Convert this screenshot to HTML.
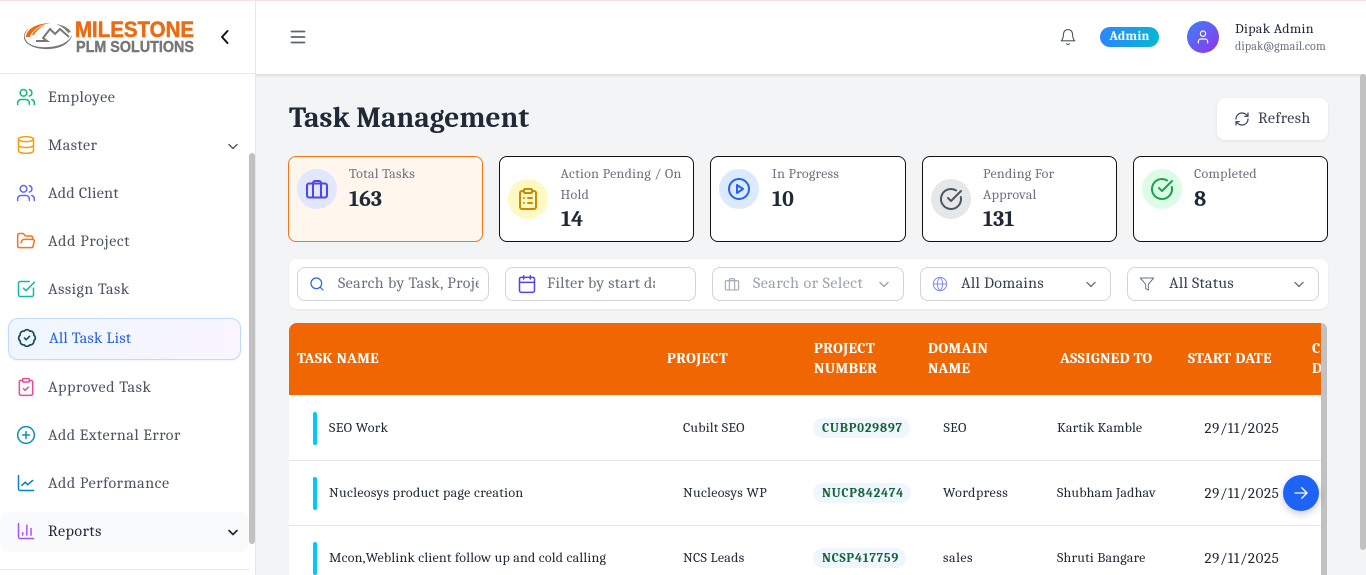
<!DOCTYPE html>
<html><head><meta charset="utf-8"><title>Task Management</title>
<style>
*{box-sizing:border-box}
html,body{margin:0;padding:0;width:1366px;height:575px;overflow:hidden;background:#f3f4f6;font-family:Caladea,Cambria,"Liberation Serif",serif;color:#1f2937}
.a{position:absolute;white-space:nowrap}
svg.i{position:absolute;fill:none;stroke-width:2;stroke-linecap:round;stroke-linejoin:round}
.m{position:absolute;left:48px;font-size:16px;letter-spacing:.5px;line-height:20px;color:#4b5563;white-space:nowrap}
.card{position:absolute;top:156px;height:86px;background:#fff;border:1px solid #111;border-radius:8px}
.circ{position:absolute;width:40px;height:40px;border-radius:50%}
.cl{position:absolute;font-size:14px;letter-spacing:.27px;line-height:20.5px;color:#6b7280;white-space:nowrap}
.cv{position:absolute;font-size:22px;line-height:24px;font-weight:700;color:#1f2937}
.f{position:absolute;top:267px;height:34px;background:#fff;border:1px solid #d1d5db;border-radius:8px}
.ft{position:absolute;top:274px;font-size:16px;letter-spacing:.3px;line-height:18px;white-space:nowrap;overflow:hidden}
.th{position:absolute;color:#fff;font-weight:700;font-size:15px;letter-spacing:.4px;line-height:20px;white-space:nowrap}
.td{position:absolute;font-size:14px;line-height:20px;color:#1f2937;white-space:nowrap}
.bar{position:absolute;left:313px;width:4px;height:33px;background:#00c8ff;border-radius:2px}
.pill{position:absolute;left:813px;height:20px;border-radius:10px;background:#eff6ff;color:#166534;font-weight:700;font-size:13px;line-height:21px;padding:0 7px 0 9px;white-space:nowrap;letter-spacing:.75px}
.ln{position:absolute;left:289px;width:1032px;height:1px;background:#e5e7eb}
</style></head><body>
<!-- main header -->
<div class="a" style="left:0;top:0;width:1366px;height:74px;background:#fff;box-shadow:0 1px 3px rgba(0,0,0,.15)"></div>
<div class="a" style="left:0;top:0;width:1366px;height:1px;background:#f3e3e8"></div>
<svg class="i" style="left:289px;top:28px;stroke:#5b6472;stroke-width:1.800" width="18" height="18" viewBox="0 0 18 18"><path d="M2.500 3.500h13M2.500 9h13M2.500 14.500h13"/></svg>
<svg class="i" style="left:1059px;top:28px;stroke:#4b5563;stroke-width:1.500" width="18" height="18" viewBox="0 0 24 24"><path d="M6 8a6 6 0 0 1 12 0c0 7 3 9 3 9H3s3-2 3-9"/><path d="M10.300 21a1.940 1.940 0 0 0 3.400 0"/></svg>
<div class="a" style="left:1100px;top:27px;width:59px;height:20px;border-radius:10px;background:linear-gradient(90deg,#2b86ff,#06b6d4);color:#fff;font-size:13px;font-weight:700;line-height:20px;text-align:center;letter-spacing:.2px">Admin</div>
<div class="a" style="left:1187px;top:21px;width:32px;height:32px;border-radius:50%;background:linear-gradient(135deg,#3b82f6,#9333ea)"></div>
<svg class="i" style="left:1195px;top:29px;stroke:#fff;stroke-width:1.700" width="16" height="16" viewBox="0 0 24 24"><path d="M19 21v-2a4 4 0 0 0-4-4H9a4 4 0 0 0-4 4v2"/><circle cx="12" cy="7" r="4"/></svg>
<div class="a" style="left:1235px;top:20px;font-size:14px;letter-spacing:.3px;line-height:18px;color:#1f2937">Dipak Admin</div>
<div class="a" style="left:1235px;top:38px;font-size:12px;letter-spacing:.13px;line-height:16px;color:#6b7280">dipak@gmail.com</div>

<!-- sidebar -->
<div class="a" style="left:0;top:1px;width:256px;height:574px;background:#fff;border-right:1px solid #e5e7eb"></div>
<div class="a" style="left:0;top:73px;width:256px;height:1px;background:#e5e7eb"></div>
<svg class="a" style="left:20px;top:15px" width="180" height="42" viewBox="0 0 180 42">
<path d="M9 13C3 17 2 25 8 29c9 7 30 7 39-1 3-3 5-5 5-8-2 5-9 11-23 12-12 1-22-2-24-9-1-3 1-7 4-10z" fill="#777"/>
<path d="M36 9c7 1 13 4 15 8l-3 1c-3-4-7-7-12-9z" fill="#808080"/>
<path d="M6 22C6 14 17 8 31 8 21 9 12 15 10 22z" fill="#ee6a10"/>
<path d="M12 20c2-5 7-8 13-10-5 3-9 6-11 10z" fill="#ee6a10"/>
<path d="M16 26h11l-4-3 7-9 5 5 5-5 9 8" fill="none" stroke="#777" stroke-width="2"/>
<text x="55" y="22" font-family="Liberation Sans" font-weight="700" font-size="22" fill="#ee6a10" stroke="#ee6a10" stroke-width=".5" textLength="119" lengthAdjust="spacingAndGlyphs">MILESTONE</text>
<text x="56" y="37" font-family="Liberation Sans" font-weight="700" font-size="15.500" fill="#777" stroke="#777" stroke-width=".4" textLength="118" lengthAdjust="spacingAndGlyphs">PLM SOLUTIONS</text>
</svg>
<svg class="i" style="left:217px;top:29px;stroke:#111" width="16" height="16" viewBox="0 0 16 16"><path d="M10.500 2 5 8l5.500 6"/></svg>

<svg class="i" style="left:16px;top:87px;stroke:#10b981;stroke-width:1.800" width="20" height="20" viewBox="0 0 24 24"><path d="M16 21v-2a4 4 0 0 0-4-4H6a4 4 0 0 0-4 4v2"/><circle cx="9" cy="7" r="4"/><path d="M22 21v-2a4 4 0 0 0-3-3.870M16 3.130a4 4 0 0 1 0 7.750"/></svg>
<div class="m" style="top:87px">Employee</div>
<svg class="i" style="left:16px;top:135px;stroke:#f59e0b;stroke-width:1.800" width="20" height="20" viewBox="0 0 24 24"><ellipse cx="12" cy="5" rx="9" ry="3"/><path d="M3 5v14c0 1.700 4 3 9 3s9-1.300 9-3V5M3 12c0 1.700 4 3 9 3s9-1.300 9-3"/></svg>
<div class="m" style="top:135px">Master</div>
<svg class="i" style="left:226px;top:139px;stroke:#4b5563;stroke-width:1.400" width="14" height="14" viewBox="0 0 14 14"><path d="M3 5.500 7 9.500 11 5.500"/></svg>
<svg class="i" style="left:16px;top:183px;stroke:#6366f1;stroke-width:1.800" width="20" height="20" viewBox="0 0 24 24"><path d="M16 21v-2a4 4 0 0 0-4-4H6a4 4 0 0 0-4 4v2"/><circle cx="9" cy="7" r="4"/><path d="M22 21v-2a4 4 0 0 0-3-3.870M16 3.130a4 4 0 0 1 0 7.750"/></svg>
<div class="m" style="top:183px;letter-spacing:.3px">Add Client</div>
<svg class="i" style="left:16px;top:231px;stroke:#f97316;stroke-width:1.800" width="20" height="20" viewBox="0 0 24 24"><path d="M6 14l1.500-2.900A2 2 0 0 1 9.200 10H20a2 2 0 0 1 1.900 2.500l-1.500 6a2 2 0 0 1-2 1.500H4a2 2 0 0 1-2-2V5a2 2 0 0 1 2-2h3.900a2 2 0 0 1 1.700.9l.8 1.200a2 2 0 0 0 1.700.9H18a2 2 0 0 1 2 2v2"/></svg>
<div class="m" style="top:231px;letter-spacing:.65px">Add Project</div>
<svg class="i" style="left:16px;top:279px;stroke:#14b8a6;stroke-width:1.800" width="20" height="20" viewBox="0 0 24 24"><path d="M21 11v8a2 2 0 0 1-2 2H5a2 2 0 0 1-2-2V5a2 2 0 0 1 2-2h11"/><path d="m9 11 3 3L22 4"/></svg>
<div class="m" style="top:279px">Assign Task</div>
<div class="a" style="left:8px;top:318px;width:233px;height:42px;border:1px solid #bfdbfe;border-radius:10px;background:linear-gradient(90deg,#eff6ff,#faf5ff);box-shadow:0 1px 2px rgba(0,0,0,.06)"></div>
<svg class="i" style="left:17px;top:328px;stroke:#164e63;stroke-width:2" width="20" height="20" viewBox="0 0 24 24"><path d="M3.850 8.620a4 4 0 0 1 4.780-4.770 4 4 0 0 1 6.740 0 4 4 0 0 1 4.780 4.780 4 4 0 0 1 0 6.740 4 4 0 0 1-4.770 4.780 4 4 0 0 1-6.750 0 4 4 0 0 1-4.780-4.770 4 4 0 0 1 0-6.760z"/><path d="m9 12 2 2 4-4"/></svg>
<div class="m" style="top:328px;left:49px;color:#2563eb;letter-spacing:.25px">All Task List</div>
<svg class="i" style="left:16px;top:377px;stroke:#ec4899;stroke-width:1.800" width="20" height="20" viewBox="0 0 24 24"><rect x="8" y="2" width="8" height="4" rx="1"/><path d="M16 4h2a2 2 0 0 1 2 2v14a2 2 0 0 1-2 2H6a2 2 0 0 1-2-2V6a2 2 0 0 1 2-2h2"/><path d="m9 14 2 2 4-4"/></svg>
<div class="m" style="top:377px;letter-spacing:.6px">Approved Task</div>
<svg class="i" style="left:16px;top:425px;stroke:#0891b2;stroke-width:1.800" width="20" height="20" viewBox="0 0 24 24"><circle cx="12" cy="12" r="10"/><path d="M8 12h8M12 8v8"/></svg>
<div class="m" style="top:425px">Add External Error</div>
<svg class="i" style="left:16px;top:473px;stroke:#0284c7;stroke-width:1.800" width="20" height="20" viewBox="0 0 24 24"><path d="M3 3v16a2 2 0 0 0 2 2h16"/><path d="m7 15 4-4 3 3 6-5"/></svg>
<div class="m" style="top:473px;letter-spacing:.55px">Add Performance</div>
<div class="a" style="left:0;top:512px;width:249px;height:40px;border-radius:10px;background:#f9fafb"></div>
<svg class="i" style="left:16px;top:521px;stroke:#a855f7;stroke-width:1.800" width="20" height="20" viewBox="0 0 24 24"><path d="M3 3v16a2 2 0 0 0 2 2h16M8 17v-3M13 17V5M18 17V9"/></svg>
<div class="m" style="top:521px;color:#1f2937">Reports</div>
<svg class="i" style="left:226px;top:525px;stroke:#1f2937;stroke-width:1.700" width="14" height="14" viewBox="0 0 14 14"><path d="M3 5.500 7 9.500 11 5.500"/></svg>
<div class="a" style="left:249px;top:153px;width:6px;height:391px;background:#c1c1c1;border-radius:3px"></div>
<div class="a" style="left:0;top:569px;width:249px;height:1px;background:#e5e7eb"></div>

<!-- page title -->
<div class="a" style="left:289px;top:101px;font-size:29.400px;line-height:36px;font-weight:700;color:#1f2937">Task Management</div>
<div class="a" style="left:1217px;top:98px;width:111px;height:42px;background:#fff;border-radius:8px;box-shadow:0 1px 3px rgba(0,0,0,.08)"></div>
<svg class="i" style="left:1234px;top:111px;stroke:#374151;stroke-width:1.800" width="16" height="16" viewBox="0 0 24 24"><path d="M3 12a9 9 0 0 1 9-9 9.750 9.750 0 0 1 6.740 2.740L21 8"/><path d="M21 3v5h-5"/><path d="M21 12a9 9 0 0 1-9 9 9.750 9.750 0 0 1-6.740-2.740L3 16"/><path d="M8 16H3v5"/></svg>
<div class="a" style="left:1258px;top:109px;font-size:16px;letter-spacing:.4px;line-height:18px;color:#374151">Refresh</div>

<!-- cards -->
<div class="card" style="left:288px;width:195px;background:#fff7ed;border-color:#f97316"></div>
<div class="circ" style="left:297px;top:169px;background:#e0e7ff"></div>
<svg class="i" style="left:305px;top:177px;stroke:#4f46e5;stroke-width:2" width="24" height="24" viewBox="0 0 24 24"><path d="M8 20V6a2 2 0 0 1 2-2h4a2 2 0 0 1 2 2v14"/><rect x="2" y="6.500" width="20" height="14" rx="2"/></svg>
<div class="cl" style="left:349px;top:164px">Total Tasks</div>
<div class="cv" style="left:349px;top:187px">163</div>

<div class="card" style="left:499px;width:195px"></div>
<div class="circ" style="left:508px;top:179px;background:#fef9c3"></div>
<svg class="i" style="left:516px;top:187px;stroke:#ca8a04;stroke-width:2" width="24" height="24" viewBox="0 0 24 24"><rect x="8" y="2" width="8" height="4" rx="1"/><path d="M16 4h2a2 2 0 0 1 2 2v14a2 2 0 0 1-2 2H6a2 2 0 0 1-2-2V6a2 2 0 0 1 2-2h2M12 11h4M12 16h4M8 11h.01M8 16h.01"/></svg>
<div class="cl" style="left:560.500px;top:164px">Action Pending / On<br>Hold</div>
<div class="cv" style="left:561px;top:207px">14</div>

<div class="card" style="left:710px;width:196px"></div>
<div class="circ" style="left:719px;top:169px;background:#dbeafe"></div>
<svg class="i" style="left:727px;top:177px;stroke:#2563eb;stroke-width:2" width="24" height="24" viewBox="0 0 24 24"><circle cx="12" cy="12" r="10"/><path d="m10 8 6 4-6 4z"/></svg>
<div class="cl" style="left:772px;top:164px">In Progress</div>
<div class="cv" style="left:772px;top:187px">10</div>

<div class="card" style="left:922px;width:195px"></div>
<div class="circ" style="left:931px;top:179px;background:#e5e7eb"></div>
<svg class="i" style="left:939px;top:187px;stroke:#4b5563;stroke-width:2" width="24" height="24" viewBox="0 0 24 24"><path d="M21.800 10A10 10 0 1 1 17 3.340"/><path d="m9 11 3 3L22 4"/></svg>
<div class="cl" style="left:983px;top:164px">Pending For<br>Approval</div>
<div class="cv" style="left:983px;top:207px">131</div>

<div class="card" style="left:1133px;width:195px"></div>
<div class="circ" style="left:1142px;top:169px;background:#dcfce7"></div>
<svg class="i" style="left:1150px;top:177px;stroke:#16a34a;stroke-width:2" width="24" height="24" viewBox="0 0 24 24"><path d="M21.800 10A10 10 0 1 1 17 3.340"/><path d="m9 11 3 3L22 4"/></svg>
<div class="cl" style="left:1194px;top:164px">Completed</div>
<div class="cv" style="left:1194px;top:187px">8</div>

<!-- filters -->
<div class="a" style="left:289px;top:259px;width:1039px;height:50px;background:#fff;border-radius:8px;box-shadow:0 1px 2px rgba(0,0,0,.05)"></div>
<div class="f" style="left:297px;width:192px"></div>
<svg class="i" style="left:309px;top:276px;stroke:#2563eb;stroke-width:1.800" width="16" height="16" viewBox="0 0 24 24"><circle cx="11" cy="11" r="8"/><path d="m21 21-4.300-4.300"/></svg>
<div class="ft" style="left:338px;width:141px;color:#6b7280;letter-spacing:.42px">Search by Task, Project</div>
<div class="f" style="left:505px;width:191px"></div>
<svg class="i" style="left:517px;top:274px;stroke:#4f46e5;stroke-width:1.800" width="20" height="20" viewBox="0 0 24 24"><path d="M8 2v4M16 2v4"/><rect x="3" y="4" width="18" height="18" rx="2"/><path d="M3 10h18"/></svg>
<div class="ft" style="left:547px;width:108px;color:#6b7280;letter-spacing:.3px">Filter by start date</div>
<div class="f" style="left:712px;width:192px"></div>
<svg class="i" style="left:724px;top:276px;stroke:#9ca3af;stroke-width:1.600" width="16" height="16" viewBox="0 0 24 24"><path d="M8 21V6a2 2 0 0 1 2-2h4a2 2 0 0 1 2 2v15"/><rect x="2" y="7" width="20" height="14" rx="2"/></svg>
<div class="ft" style="left:753px;width:112px;color:#9ca3af;letter-spacing:.5px">Search or Select</div>
<svg class="i" style="left:877px;top:277px;stroke:#9ca3af;stroke-width:1.400" width="14" height="14" viewBox="0 0 14 14"><path d="M3 5.500 7 9.500 11 5.500"/></svg>
<div class="f" style="left:920px;width:191px"></div>
<svg class="i" style="left:932px;top:276px;stroke:#818cf8;stroke-width:1.500" width="16" height="16" viewBox="0 0 24 24"><circle cx="12" cy="12" r="10"/><path d="M12 2a14.500 14.500 0 0 0 0 20 14.500 14.500 0 0 0 0-20M2 12h20"/></svg>
<div class="ft" style="left:961px;color:#374151">All Domains</div>
<svg class="i" style="left:1084px;top:277px;stroke:#6b7280;stroke-width:1.400" width="14" height="14" viewBox="0 0 14 14"><path d="M3 5.500 7 9.500 11 5.500"/></svg>
<div class="f" style="left:1127px;width:192px"></div>
<svg class="i" style="left:1139px;top:276px;stroke:#6b7280;stroke-width:1.500" width="16" height="16" viewBox="0 0 24 24"><path d="M22 3H2l8 9.460V19l4 2v-8.540z"/></svg>
<div class="ft" style="left:1169px;color:#374151">All Status</div>
<svg class="i" style="left:1292px;top:277px;stroke:#6b7280;stroke-width:1.400" width="14" height="14" viewBox="0 0 14 14"><path d="M3 5.500 7 9.500 11 5.500"/></svg>

<!-- table -->
<div class="a" style="left:289px;top:323px;width:1038px;height:252px;background:#c1c1c1;border-radius:8px 6px 0 0"></div>
<div class="a" style="left:289px;top:395px;width:1032px;height:180px;background:#fff"></div>
<div class="a" style="left:289px;top:323px;width:1032px;height:72px;background:#ef6603;border-radius:8px 0 0 0;overflow:hidden">
<div class="th" style="left:8px;top:25px">TASK NAME</div>
<div class="th" style="left:378px;top:25px">PROJECT</div>
<div class="th" style="left:525px;top:15px">PROJECT<br>NUMBER</div>
<div class="th" style="left:639px;top:15px">DOMAIN<br>NAME</div>
<div class="th" style="left:771px;top:25px">ASSIGNED TO</div>
<div class="th" style="left:899px;top:25px">START DATE</div>
<div class="th" style="left:1023px;top:15px">COMPLETION<br>DATE</div>
</div>
<div class="ln" style="top:460px"></div>
<div class="ln" style="top:525px"></div>

<div class="bar" style="top:412px"></div>
<div class="td" style="left:329px;top:418px;letter-spacing:.35px">SEO Work</div>
<div class="td" style="left:683px;top:418px;letter-spacing:.2px">Cubilt SEO</div>
<div class="pill" style="top:418px">CUBP029897</div>
<div class="td" style="left:943.500px;top:418px;letter-spacing:.3px">SEO</div>
<div class="td" style="left:1057px;top:418px;letter-spacing:.1px">Kartik Kamble</div>
<div class="td" style="left:1204.500px;top:418px;font-size:15px;letter-spacing:.6px">29/11/2025</div>

<div class="bar" style="top:477px"></div>
<div class="td" style="left:329px;top:483px;letter-spacing:.32px">Nucleosys product page creation</div>
<div class="td" style="left:683px;top:483px;letter-spacing:.3px">Nucleosys WP</div>
<div class="pill" style="top:483px">NUCP842474</div>
<div class="td" style="left:943px;top:483px;letter-spacing:.5px">Wordpress</div>
<div class="td" style="left:1057px;top:483px;letter-spacing:.15px">Shubham Jadhav</div>
<div class="td" style="left:1204.500px;top:483px;font-size:15px;letter-spacing:.6px">29/11/2025</div>

<div class="bar" style="top:542px"></div>
<div class="td" style="left:329px;top:548px;letter-spacing:.2px">Mcon,Weblink client follow up and cold calling</div>
<div class="td" style="left:683px;top:548px;letter-spacing:.3px">NCS Leads</div>
<div class="pill" style="top:548px">NCSP417759</div>
<div class="td" style="left:943px;top:548px;letter-spacing:.5px">sales</div>
<div class="td" style="left:1057px;top:548px;letter-spacing:.2px">Shruti Bangare</div>
<div class="td" style="left:1204.500px;top:548px;font-size:15px;letter-spacing:.6px">29/11/2025</div>

<div class="a" style="left:1283px;top:475px;width:36px;height:36px;border-radius:50%;background:#1d63f5;box-shadow:0 3px 8px rgba(0,0,0,.2)"></div>
<svg class="i" style="left:1292px;top:484px;stroke:#fff;stroke-width:1.800" width="18" height="18" viewBox="0 0 24 24"><path d="M4 12h16M13 5l7 7-7 7"/></svg>

<div class="a" style="left:1360px;top:74px;width:6px;height:476px;background:#c1c1c1;border-radius:3px"></div>
</body></html>
